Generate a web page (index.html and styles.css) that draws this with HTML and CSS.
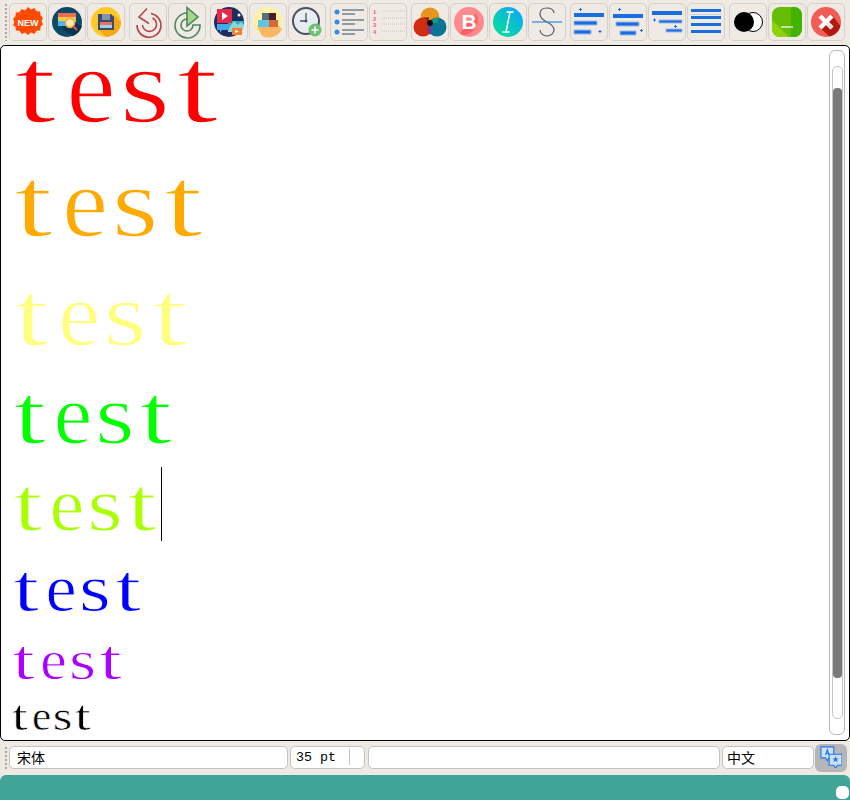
FILE: index.html

```html
<!DOCTYPE html>
<html>
<head>
  <meta charset="utf-8">
  <title>Editor</title>
  <link rel="stylesheet" href="styles.css">
</head>
<body>
  <div class="toolbar">
    <div class="grip"></div>
    <div class="group">
      <button class="btn"><svg viewBox="0 0 30 30"><path fill="#ff4a00" d="M15 0l3 2.500 3.500-1.500 2 3.200 3.700.3.300 3.700 2.500 2.800-1.500 3 1.500 3.300-2.500 2.500-.3 3.700-3.700.3-2 3.200-3.500-1.500-3 2.500-3-2.500-3.500 1.500-2-3.200-3.700-.3-.3-3.700L0 18.300 1.500 15 0 12l2.500-2.800.3-3.700 3.700-.3 2-3.200 3.500 1.500z"/><text x="15" y="18.500" class="new">NEW</text></svg></button>
      <button class="btn"><svg viewBox="0 0 30 30"><circle cx="15" cy="15" r="15" fill="#0d4a68"/><path fill="#0a3550" d="M9 21l7-7 14 5a15 15 0 0 1-9 10z"/><rect x="6" y="6" width="18" height="5" fill="#ef6c4f"/><rect x="6" y="10" width="18" height="5" fill="#f9c84a"/><rect x="6" y="14" width="11" height="5" fill="#4db6e8"/><circle cx="18" cy="16" r="4.500" fill="#fbe9a8" stroke="#f4a640" stroke-width="1.500"/><path stroke="#e2574c" stroke-width="2" d="M21 19l4 4"/></svg></button>
      <button class="btn"><svg viewBox="0 0 30 30"><circle cx="15" cy="15" r="15" fill="#ffc928"/><path fill="#f5a917" d="M23 8l7 7a15 15 0 0 1-15 15l-7-7z"/><path fill="#3c4a6b" d="M7 7h13l3 3v13H7z"/><rect x="11" y="7" width="8" height="6" fill="#8592ad"/><rect x="9" y="15" width="12" height="3" fill="#ef6d63"/><rect x="9" y="18" width="12" height="3" fill="#9fd3e6"/></svg></button>
    </div>
    <div class="group">
      <button class="btn"><svg viewBox="0 0 30 30" fill="none" stroke="#b4444c" stroke-width="1.600"><path d="M14 1.500L6 10l10 6.500"/><path d="M18 6.500A12 12 0 1 1 4 18"/><path d="M19.500 11A7 7 0 1 1 9.500 18"/></svg></button>
      <button class="btn"><svg viewBox="0 0 30 30" fill="none" stroke="#4f8560" stroke-width="1.600"><path d="M15 6A12.500 12.500 0 1 0 28 18H21A6 6 0 1 1 15 12"/><path d="M15 .5l11 9.500-11 9z" fill="#a5d68a"/></svg></button>
    </div>
    <div class="group">
      <button class="btn"><svg viewBox="0 0 30 30"><circle cx="15" cy="15" r="15" fill="#1d2d5e"/><path fill="#27b2c8" d="M14 14h16a15 15 0 0 1-3 9H14z"/><path fill="#8fd4d6" d="M14 22l6-8 4 4 3-3 3 3v2a15 15 0 0 1-3 5H14z"/><path fill="#e4294b" d="M3 2h15v14H3z"/><path fill="#fff" d="M8 5l6 4-6 4z"/><path fill="#46a7e8" d="M3 17h12v6H8l-2 3v-3H3z"/><path fill="#f28030" d="M18 21h10v7H18z"/><path fill="#fff" d="M21 23l4 1.500-4 1.500z"/><circle cx="25" cy="8" r="1.500" fill="#fff"/></svg></button>
      <button class="btn"><svg viewBox="0 0 30 30"><circle cx="15" cy="15" r="15" fill="#fff1a8"/><path fill="#f9b766" d="M4 19h22l3 3a15 15 0 0 1-20 7z"/><rect x="9" y="6" width="7" height="7" fill="#55707c"/><rect x="16" y="6" width="7" height="7" fill="#4c1d26"/><rect x="5" y="13" width="11" height="7" fill="#5fc5e0"/><rect x="16" y="13" width="9" height="7" fill="#d9683a"/></svg></button>
      <button class="btn"><svg viewBox="0 0 30 30"><circle cx="14" cy="14" r="13" fill="#e8edf2" stroke="#4a5263" stroke-width="2"/><path d="M14 6v8h-6" fill="none" stroke="#4a5263" stroke-width="1.300"/><circle cx="14" cy="14" r="1.500" fill="#4a5263"/><circle cx="23" cy="23" r="6.500" fill="#6cc270"/><path d="M23 19.500v7M19.500 23h7" stroke="#fff" stroke-width="1.500"/></svg></button>
    </div>
    <div class="group">
      <button class="btn"><svg viewBox="0 0 30 30"><g fill="#2f8de4"><circle cx="3" cy="5" r="2.500"/><circle cx="3" cy="15" r="2.500"/><circle cx="3" cy="25" r="2.500"/></g><path stroke="#74808a" stroke-width="1.500" d="M8 3h22M8 7h13M8 13h22M8 17h13M8 23h22M8 27h13"/></svg></button>
      <button class="btn"><svg viewBox="0 0 30 30"><g class="num"><text x="0" y="7">1</text><text x="0" y="14">2</text><text x="0" y="20">3</text><text x="0" y="27">4</text></g><path stroke="#c9c4c0" stroke-dasharray="1 1" d="M9 4h24M9 11h24M9 17h24M9 24h24"/></svg></button>
    </div>
    <div class="group">
      <button class="btn"><svg viewBox="0 0 30 30"><circle cx="15" cy="10" r="9.500" fill="#e8941d"/><circle cx="8" cy="20" r="9.500" fill="#d12c0f"/><circle cx="22" cy="20" r="9.500" fill="#0c7595"/><path fill="#6d1a2a" d="M8 10.500a9.500 9.500 0 0 1 7 8 9.500 9.500 0 0 1-1-8z"/><path fill="#14a088" d="M22 10.500a9.500 9.500 0 0 0-7 8 9 9 0 0 1 8-3z"/><path fill="#6f3a9c" d="M15 16a9.500 9.500 0 0 1 0 12 9.500 9.500 0 0 1 0-12z"/><circle cx="15" cy="16" r="3" fill="#0c0c0c"/></svg></button>
      <button class="btn"><svg viewBox="0 0 30 30"><circle cx="15" cy="15" r="15" fill="#ff8a8e"/><path fill="#fb6167" d="M22 6a15 15 0 0 1-14 22l-2-2z"/><text x="15" y="22" class="letter-b">B</text></svg></button>
      <button class="btn"><svg viewBox="0 0 30 30"><defs><linearGradient id="ig" x1="0" y1="1" x2="1" y2="0"><stop offset="0" stop-color="#0be58e"/><stop offset="1" stop-color="#09a3ff"/></linearGradient></defs><circle cx="15" cy="15" r="15" fill="url(#ig)"/><path stroke="#fff" stroke-width="1.500" d="M17 5L13 25M13.500 5h7M9.500 25h7" fill="none"/></svg></button>
      <button class="btn"><svg viewBox="0 0 30 30" fill="none" stroke="#4f5a66" stroke-width="1.200"><path d="M22 6c0-3-3-5-7-5s-7 2-7 6c0 3 3 6 7 8s7 5 7 8-3 6-7 6-7-3-7-6"/><path stroke="#3d8ee0" stroke-width="1.300" d="M0 15h30"/></svg></button>
    </div>
    <div class="group">
      <button class="btn"><svg viewBox="0 0 30 30"><path fill="#1a6fdf" d="M0 6h30v4H0z"/><path fill="#1a6fdf" d="M0 14h23v4H0zM0 23h17v4H0z" stroke="#9ab8e8"/><path stroke="#1a6fdf" d="M5 2.500h3M6.500 1v3M24.500 24.500h3M26 23v3"/></svg></button>
      <button class="btn"><svg viewBox="0 0 30 30"><path fill="#1a6fdf" d="M0 7h30v4H0z"/><path fill="#1a6fdf" d="M3 15h23v4H3zM7 24h16v4H7z" stroke="#9ab8e8"/><path stroke="#1a6fdf" d="M5 2.500h3M6.500 1v3M27 23.500h3M28.500 22v3"/></svg></button>
      <button class="btn"><svg viewBox="0 0 30 30"><path fill="#1a6fdf" d="M0 4h30v4H0z"/><path fill="#1a6fdf" d="M7 13h23v3H7zM14 22h16v3H14z" stroke="#9ab8e8"/><path stroke="#1a6fdf" d="M1 13h3M2.500 11.500v3M22 19.500h3M23.500 18v3"/></svg></button>
      <button class="btn"><svg viewBox="0 0 30 30" fill="#1a6fdf"><path d="M0 2h30v3H0zM0 9h30v3H0zM0 16h30v3H0zM0 23h30v3H0z"/><path d="M0 7h30v1H0z" opacity="0.2"/></svg></button>
    </div>
    <div class="group">
      <button class="btn"><svg viewBox="0 0 30 30"><circle cx="20" cy="15" r="9.500" fill="#fff" stroke="#000" stroke-width="1"/><circle cx="11" cy="15" r="10" fill="#000"/></svg></button>
      <button class="btn"><svg viewBox="0 0 30 30"><rect width="30" height="30" rx="8" fill="#65bd04"/><path fill="#42b300" d="M19 0h3a8 8 0 0 1 8 8v14a8 8 0 0 1-8 8h-3z"/><path fill="#8ed307" d="M0 13l17 17H8a8 8 0 0 1-8-8z"/><path stroke="#fff" stroke-width="1.200" d="M9 20h12"/></svg></button>
      <button class="btn"><svg viewBox="0 0 30 30"><circle cx="15" cy="15" r="15" fill="#f25c54"/><path fill="#b5190e" d="M21 8l8.500 11a15 15 0 0 1-11 10.500L9 21z"/><path stroke="#fff" stroke-width="4.500" d="M9 9l12 12M21 9L9 21"/><path fill="#dcdcdc" d="M15 15l7.500 4.500-3 3z"/></svg></button>
    </div>
  </div>

  <div class="editor">
    <div class="doc">
      <div class="line size1 red"><i>t</i><i>e</i><i>s</i><i>t</i></div>
      <div class="line size2 orange"><i>t</i><i>e</i><i>s</i><i>t</i></div>
      <div class="line size3 yellow"><i>t</i><i>e</i><i>s</i><i>t</i></div>
      <div class="line size4 green"><i>t</i><i>e</i><i>s</i><i>t</i></div>
      <div class="line size5 lime"><i>t</i><i>e</i><i>s</i><i>t</i><b class="caret"></b></div>
      <div class="line size6 blue"><i>t</i><i>e</i><i>s</i><i>t</i></div>
      <div class="line size7 purple"><i>t</i><i>e</i><i>s</i><i>t</i></div>
      <div class="line size8 black"><i>t</i><i>e</i><i>s</i><i>t</i></div>
    </div>
    <div class="scroll">
      <div class="track"><div class="thumb"></div></div>
    </div>
  </div>

  <div class="statusbar">
    <div class="grip"></div>
    <div class="field font-name">宋体</div>
    <div class="field font-size"><span>35 pt</span><u></u></div>
    <div class="field blank"></div>
    <div class="field lang">中文</div>
    <button class="translate"><svg viewBox="0 0 24 24" fill="none" stroke="#1a78e6" stroke-width="1.200"><path fill="#cfe0f5" d="M1 1h14v12h-5l-2 3-2-3H1z"/><path d="M6 10l2-6 2 6M6.800 8h2.400"/><path fill="#cfe0f5" d="M10 9h14v12h-5l-2 3-2-3h-5z"/><path fill="#1a78e6" stroke="none" d="M17 11l1 2.500h2.500l-2 1.600.8 2.600-2.300-1.500-2.300 1.500.8-2.600-2-1.600H16z"/></svg></button>
  </div>

  <div class="footer"><div class="corner"></div></div>
</body>
</html>
```

FILE: styles.css

```css
* {
  box-sizing: border-box;
}

html, body {
  height: 100%;
}

body {
  margin: 0;
  display: flex;
  flex-direction: column;
  background: #efe9e4;
  overflow: hidden;
}

.grip {
  width: 4px;
  flex: none;
  margin-left: 4px;
  background-image: radial-gradient(#a9a5a1 1px, transparent 1.2px);
  background-size: 4px 4px;
}

/* top toolbar */
.toolbar {
  height: 45px;
  flex: none;
  display: flex;
  padding: 3px 5px 4px 0;
}

.group {
  display: flex;
  gap: 1px;
  margin-right: 4px;
}

.toolbar .grip {
  margin-right: 1px;
}

.toolbar .group:last-child {
  margin-right: 0;
}

.btn {
  width: 38px;
  height: 38px;
  padding: 3px;
  border: 1px solid #d5d0cb;
  border-radius: 5px;
  background: #f0eae5;
  display: flex;
}

.btn svg {
  width: 30px;
  height: 30px;
  overflow: visible;
}

.new {
  font: bold 9px "Liberation Sans", sans-serif;
  fill: #fff;
  text-anchor: middle;
}

.letter-b {
  font: bold 21px "Liberation Sans", sans-serif;
  fill: #fff;
  text-anchor: middle;
}

.num text {
  font: bold 6px "Liberation Sans", sans-serif;
  fill: #f4606a;
}

/* text area */
.editor {
  height: 696px;
  flex: none;
  display: flex;
  background: #fff;
  border: 1px solid #000;
  border-radius: 5px;
}

.doc {
  flex: 1;
  padding: 2px 0 0 9px;
  font-family: "Liberation Serif", serif;
}

.line {
  display: flex;
  align-items: baseline;
}

/* white stroke thins the glyphs down, the reference font is lighter */
.line i {
  font-style: normal;
  width: 0.5em;
  text-align: center;
  -webkit-text-stroke: 0.014em #fff;
}

/* the letters are narrower than in the original font, so widen each one */
.line i:nth-child(1),
.line i:nth-child(4) {
  transform: translateX(-0.015em) scaleX(1.38);
}

.line i:nth-child(2) {
  transform: scaleX(1.03);
}

.line i:nth-child(3) {
  transform: scaleX(1.2);
}

.size1 { font-size: 108px; height: 76px; line-height: 76px; }
.size2 { font-size: 100px; height: 70px; line-height: 70px; margin-top: 44px; }
.size3 { font-size: 92px; height: 64px; line-height: 64px; margin-top: 44px; }
.size4 { font-size: 84px; height: 59px; line-height: 59px; margin-top: 39px; }
.size5 { font-size: 76px; height: 53px; line-height: 53px; margin-top: 34px; }
.size6 { font-size: 68px; height: 48px; line-height: 48px; margin-top: 33px; }
.size7 { font-size: 58px; height: 41px; line-height: 41px; margin-top: 27px; }
.size8 { font-size: 42px; height: 29px; line-height: 29px; margin-top: 22px; }

.red { color: #ff0000; }
.orange { color: #ffaa00; }
.yellow { color: #ffff7f; }
.green { color: #00ff00; }
.lime { color: #aaff00; }
.blue { color: #0000ff; }
.purple { color: #aa00ff; }
.black { color: #000; }

.caret {
  width: 1px;
  height: 74px;
  margin: 0 0 -10px -1px;
  background: #000;
  align-self: flex-end;
}

.scroll {
  width: 16px;
  flex: none;
  margin: 4px 4px 5px 0;
  padding: 15px 1px 15px 2px;
  background: #fff;
  border: 1px solid #b8b8b8;
  border-radius: 6px;
}

.track {
  height: 100%;
  padding: 21px 0 40px;
  border: 1px solid #c4c4c4;
  border-radius: 5px;
}

.thumb {
  height: 100%;
  background: #7a7a7a;
  border-radius: 4px;
}

/* bottom bars */
.statusbar {
  height: 34px;
  flex: none;
  display: flex;
  gap: 2px;
  padding: 5px 3px 5px 0;
}

.statusbar .grip {
  margin-right: -1px;
}

.field {
  height: 23px;
  padding: 0 0 1px 7px;
  display: flex;
  align-items: center;
  flex: none;
  background: #fff;
  border: 1px solid #c6c2be;
  border-radius: 5px;
  font: 14px "Noto Sans CJK SC", sans-serif;
  color: #000;
}

.font-name { width: 279px; }

.font-size {
  width: 75px;
  margin-right: 1px;
  padding-left: 5px;
  font: 13.3px "Liberation Mono", monospace;
}

.font-size u {
  width: 1px;
  height: 16px;
  margin-left: 13px;
  background: #c8c4c0;
}

.blank { width: 352px; }

.lang {
  width: 92px;
  padding-left: 4px;
}

.translate {
  width: 32px;
  height: 28px;
  margin: -2px 0 0 -1px;
  padding: 2px 5px;
  border: none;
  border-radius: 6px;
  background: #b6b5b9;
}

.translate svg {
  width: 22px;
  height: 22px;
}

.footer {
  flex: 1;
  display: flex;
  justify-content: flex-end;
  align-items: flex-end;
  padding: 0 1px 1px 0;
  background: #40a596;
  border-radius: 6px 6px 0 0;
}

.corner {
  width: 13px;
  height: 13px;
  background: #fff;
  border-radius: 5px;
}
```
